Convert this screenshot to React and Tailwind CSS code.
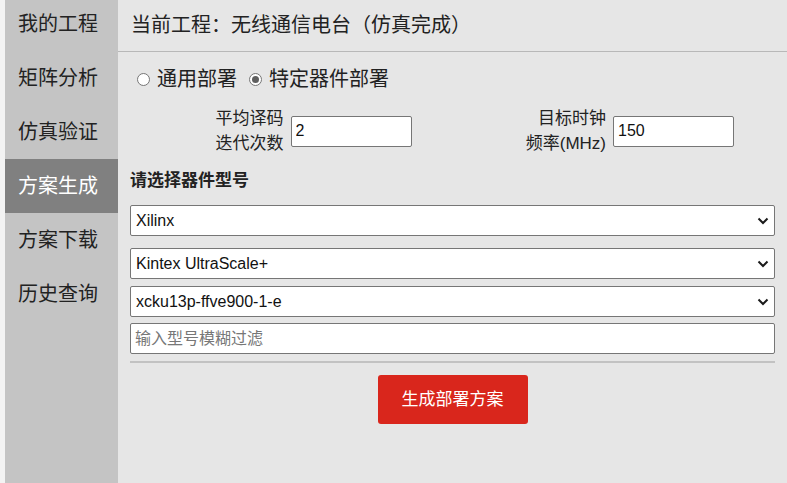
import React, { useState } from 'react';

const navItems = ['我的工程', '矩阵分析', '仿真验证', '方案生成', '方案下载', '历史查询'];

const Chevron = () => (
    <svg width="12" height="8" viewBox="0 0 12 8" className="pointer-events-none absolute right-[5px] top-1/2 -translate-y-1/2">
        <path d="M1.5 1.5 L6 6 L10.5 1.5" fill="none" stroke="#1a1a1a" strokeWidth="2" />
    </svg>
);

const Select = ({ value, className = '' }) => (
    <div className={`relative h-[31px] bg-white border border-[#767676] rounded-[2px] flex items-center pl-[5px] text-[16px] text-[#111] ${className}`}>
        <span>{value}</span>
        <Chevron />
    </div>
);

const Radio = ({ checked, label, onClick }) => (
    <label className="flex items-center cursor-pointer" onClick={onClick}>
        <span className="w-[13px] h-[13px] rounded-full border border-[#767676] bg-white flex items-center justify-center">
            {checked && <span className="w-[7px] h-[7px] rounded-full bg-[#5f5f5f]" />}
        </span>
        <span className="ml-[7px] text-[20px] leading-[24px]">{label}</span>
    </label>
);

const App = () => {
    const [mode, setMode] = useState('specific');
    const [active, setActive] = useState('方案生成');

    return (
        <div
            className="flex h-[483px] w-[787px] bg-[#f3f3f3] text-[#222] overflow-hidden"
            style={{ fontFamily: '"Liberation Sans", "Noto Sans CJK SC", sans-serif' }}
        >
            {/* sidebar */}
            <div className="ml-[5px] w-[113px] bg-[#c4c4c4] shrink-0">
                <div className="-mt-[3px]">
                    {navItems.map(item => (
                        <div
                            key={item}
                            onClick={() => setActive(item)}
                            className={`h-[54px] flex items-center pl-[13px] text-[20px] cursor-pointer ${active === item ? 'bg-[#808080] text-white' : ''}`}
                        >
                            {item}
                        </div>
                    ))}
                </div>
            </div>

            {/* main */}
            <div className="flex-1 bg-[#e6e6e6] flex flex-col">
                <div className="h-[52px] border-b border-[#b8b8b8] flex items-center pl-[13px] pb-[1px] text-[20px]">
                    当前工程：无线通信电台（仿真完成）
                </div>

                <div className="px-[12px] flex flex-col">
                    <div className="mt-[15px] ml-[7px] flex items-center gap-[12px]">
                        <Radio checked={mode === 'general'} label="通用部署" onClick={() => setMode('general')} />
                        <Radio checked={mode === 'specific'} label="特定器件部署" onClick={() => setMode('specific')} />
                    </div>

                    <div className="mt-[15px] grid grid-cols-2 text-[17px] leading-[25px]">
                        <div className="flex items-center justify-end pr-[41px] gap-[7px]">
                            <div className="text-right">平均译码<br />迭代次数</div>
                            <input
                                defaultValue="2"
                                className="w-[121px] h-[31px] bg-white border border-[#767676] rounded-[2px] px-[4px] text-[16px] text-[#111] outline-none"
                            />
                        </div>
                        <div className="flex items-center justify-end pr-[41px] gap-[7px]">
                            <div className="text-right">目标时钟<br />频率(MHz)</div>
                            <input
                                defaultValue="150"
                                className="w-[121px] h-[31px] bg-white border border-[#767676] rounded-[2px] px-[4px] text-[16px] text-[#111] outline-none"
                            />
                        </div>
                    </div>

                    <div className="mt-[13px] h-[24px] flex items-center font-bold text-[17px]">请选择器件型号</div>

                    <Select value="Xilinx" className="mt-[12px]" />
                    <Select value="Kintex UltraScale+" className="mt-[12px]" />
                    <Select value="xcku13p-ffve900-1-e" className="mt-[7px]" />
                    <input
                        placeholder="输入型号模糊过滤"
                        className="mt-[6px] h-[31px] bg-white border border-[#767676] rounded-[2px] px-[4px] text-[16px] text-[#111] placeholder:text-[#777] outline-none"
                    />

                    <div className="mt-[7px] h-[2px] bg-[#c2c2c2]" />

                    <div className="mt-[12px] flex justify-center">
                        <button className="w-[150px] h-[49px] bg-[#d9261c] text-white text-[17px] rounded-[3px]">
                            生成部署方案
                        </button>
                    </div>
                </div>
            </div>
        </div>
    );
};

export default App;
